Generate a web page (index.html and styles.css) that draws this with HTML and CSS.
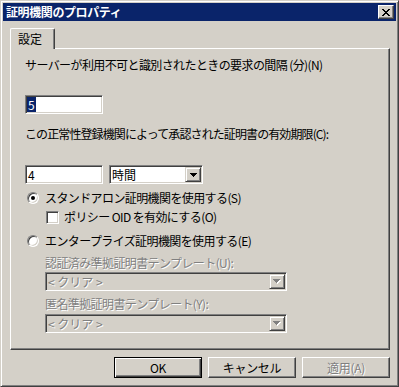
FILE: index.html
```html
<!DOCTYPE html>
<html lang="ja">
<head>
    <meta charset="UTF-8">
    <title>証明機関のプロパティ</title>
    <link rel="stylesheet" href="styles.css">
</head>
<body>
    <div class="window">
        <div class="titlebar">
            <span class="title">証明機関のプロパティ</span>
            <span class="close-btn">
                <svg width="8" height="7" viewBox="0 0 8 7" shape-rendering="crispEdges"><path d="M0 0h2v1H0z M6 0h2v1H6z M1 1h2v1H1z M5 1h2v1H5z M2 2h4v1H2z M3 3h2v1H3z M2 4h4v1H2z M1 5h2v1H1z M5 5h2v1H5z M0 6h2v1H0z M6 6h2v1H6z" fill="#000"/></svg>
            </span>
        </div>

        <div class="client">
            <div class="tabstrip">
                <div class="tab">設定</div>
            </div>

            <div class="panel">
                <div class="label label-interval">サーバーが利用不可と識別されたときの要求の間隔 (分)(N)</div>
                <div class="edit edit-interval"><span class="selected">5</span></div>

                <div class="label label-period">この正常性登録機関によって承認された証明書の有効期限(C):</div>
                <div class="period-row">
                    <div class="edit">4</div>
                    <div class="combo combo-unit">
                        <span class="combo-text">時間</span>
                        <span class="drop"><svg width="7" height="4" viewBox="0 0 7 4" shape-rendering="crispEdges"><path d="M0 0h7v1H0z M1 1h5v1H1z M2 2h3v1H2z M3 3h1v1H3z" fill="#000"/></svg></span>
                    </div>
                </div>

                <div class="option option-standalone"><span class="radio checked"></span>スタンドアロン証明機関を使用する(S)</div>
                <div class="option option-oid"><span class="check"></span>ポリシー OID を有効にする(O)</div>
                <div class="option option-enterprise"><span class="radio"></span>エンタープライズ証明機関を使用する(E)</div>

                <div class="label sub-label disabled">認証済み準拠証明書テンプレート(U):</div>
                <div class="combo combo-template disabled">
                    <span class="combo-text">&lt; クリア &gt;</span>
                    <span class="drop"><svg width="8" height="5" viewBox="0 0 8 5" shape-rendering="crispEdges"><path d="M1 1h7v1H1z M2 2h5v1H2z M3 3h3v1H3z M4 4h1v1H4z" fill="#fff"/><path d="M0 0h7v1H0z M1 1h5v1H1z M2 2h3v1H2z M3 3h1v1H3z" fill="#808080"/></svg></span>
                </div>

                <div class="label sub-label label-anon disabled">匿名準拠証明書テンプレート(Y):</div>
                <div class="combo combo-template combo-anon disabled">
                    <span class="combo-text">&lt; クリア &gt;</span>
                    <span class="drop"><svg width="8" height="5" viewBox="0 0 8 5" shape-rendering="crispEdges"><path d="M1 1h7v1H1z M2 2h5v1H2z M3 3h3v1H3z M4 4h1v1H4z" fill="#fff"/><path d="M0 0h7v1H0z M1 1h5v1H1z M2 2h3v1H2z M3 3h1v1H3z" fill="#808080"/></svg></span>
                </div>
            </div>

            <div class="buttons">
                <div class="btn btn-default">OK</div>
                <div class="btn">キャンセル</div>
                <div class="btn disabled">適用(A)</div>
            </div>
        </div>
    </div>
</body>
</html>
```

FILE: styles.css
```css
body {
    margin: 0;
    font-family: "Noto Sans CJK JP", sans-serif;
    font-size: 12px;
    background: #D4D0C8;
    color: #000;
}
.window {
    width: 399px;
    height: 387px;
    box-sizing: border-box;
    border: 1px solid;
    border-color: #D4D0C8 #404040 #404040 #D4D0C8;
    box-shadow: inset 1px 1px #fff, inset -1px -1px #808080;
    padding: 2px;
    background: #D4D0C8;
    display: flex;
    flex-direction: column;
}
.titlebar {
    height: 18px;
    flex: none;
    background: #0A246A;
    color: #fff;
    font-weight: bold;
    display: flex;
    align-items: center;
    justify-content: space-between;
    padding: 0 2px 0 3px;
}
.title {
    line-height: 18px;
    letter-spacing: -0.4px;
}
.close-btn {
    width: 16px;
    height: 14px;
    box-sizing: border-box;
    border: 1px solid;
    border-color: #fff #404040 #404040 #fff;
    box-shadow: inset -1px -1px #808080;
    background: #D4D0C8;
    display: flex;
    align-items: center;
    justify-content: center;
}
.client {
    flex: 1;
    padding: 7px 6px 0 7px;
    display: flex;
    flex-direction: column;
}
.tabstrip {
    height: 20px;
    display: flex;
}
.tab {
    position: relative; /* panelin üst kenarını örtsün */
    z-index: 1;
    width: 45px;
    height: 21px;
    box-sizing: border-box;
    border: 1px solid;
    border-color: #fff #404040 transparent #fff;
    border-bottom: none;
    border-radius: 2px 2px 0 0;
    box-shadow: inset -1px 0 #808080;
    background: #D4D0C8;
    padding-left: 7px;
    line-height: 19px;
}
.panel {
    height: 302px;
    box-sizing: border-box;
    border: 1px solid;
    border-color: #fff #404040 #404040 #fff;
    box-shadow: inset -1px -1px #808080;
    padding-left: 14px;
    display: flex;
    flex-direction: column;
    align-items: flex-start;
}
.label, .option {
    line-height: 14px;
    height: 14px;
    white-space: nowrap;
    letter-spacing: -0.6px;
}
.label-interval { margin-top: 9px; }
.edit-interval { margin-top: 23px; }
.label-period {
    margin-top: 13px;
    letter-spacing: -0.9px;
}
.period-row {
    margin-top: 24px;
    display: flex;
    gap: 6px;
}
.edit, .combo {
    height: 19px;
    box-sizing: border-box;
    border: 1px solid;
    border-color: #808080 #fff #fff #808080;
    box-shadow: inset 1px 1px #404040, inset -1px -1px #D4D0C8;
    background: #fff;
    display: flex;
    align-items: center;
    padding: 1px;
}
.edit {
    width: 78px;
    padding-left: 2px;
}
.edit-interval {
    padding-left: 1px;
}
.selected {
    background: #0A246A;
    color: #fff;
    height: 15px;
    line-height: 15px;
    padding: 0 1px;
}
.combo {
    width: 94px;
}
.combo-text {
    padding-left: 1px;
    flex: 1;
    white-space: nowrap;
}
.drop {
    width: 16px;
    height: 15px;
    box-sizing: border-box;
    border: 1px solid;
    border-color: #D4D0C8 #404040 #404040 #D4D0C8;
    box-shadow: inset 1px 1px #fff, inset -1px -1px #808080;
    background: #D4D0C8;
    display: flex;
    align-items: center;
    justify-content: center;
}
.option {
    display: flex;
    align-items: center;
}
.option-standalone {
    margin-top: 7px;
    padding-left: 2px;
}
.option-oid {
    margin-top: 5px;
    padding-left: 21px;
}
.option-enterprise {
    margin-top: 10px;
    padding-left: 2px;
}
.radio {
    width: 12px;
    height: 12px;
    box-sizing: border-box;
    border: 1px solid;
    border-color: #808080 #fff #fff #808080;
    border-radius: 50%;
    box-shadow: inset 1px 1px #404040, inset -1px -1px #D4D0C8;
    background: #fff;
    margin-right: 6px;
    display: flex;
    align-items: center;
    justify-content: center;
}
.radio.checked::after {
    content: "";
    width: 4px;
    height: 4px;
    border-radius: 50%;
    background: #000;
}
.check {
    width: 13px;
    height: 13px;
    box-sizing: border-box;
    border: 1px solid;
    border-color: #808080 #fff #fff #808080;
    box-shadow: inset 1px 1px #404040, inset -1px -1px #D4D0C8;
    background: #fff;
    margin-right: 5px;
}
.sub-label {
    margin-top: 8px;
    margin-left: 20px;
}
.label-anon { margin-top: 6px; }
.combo-template {
    width: 242px;
    margin-top: 2px;
    margin-left: 20px;
}
.combo-anon { margin-top: 3px; }
.combo.disabled {
    background: #D4D0C8;
}
.disabled {
    color: #808080;
    text-shadow: 1px 1px #fff;
}
.buttons {
    margin-top: 7px;
    display: flex;
    justify-content: flex-end;
    gap: 6px;
}
.btn {
    width: 88px;
    height: 21px;
    box-sizing: border-box;
    border: 1px solid;
    border-color: #fff #404040 #404040 #fff;
    box-shadow: inset -1px -1px #808080;
    display: flex;
    align-items: center;
    justify-content: center;
    letter-spacing: -0.3px;
}
.btn-default {
    border-color: #000;
    box-shadow: inset 1px 1px #fff, inset -1px -1px #404040, inset -2px -2px #808080;
}
```
